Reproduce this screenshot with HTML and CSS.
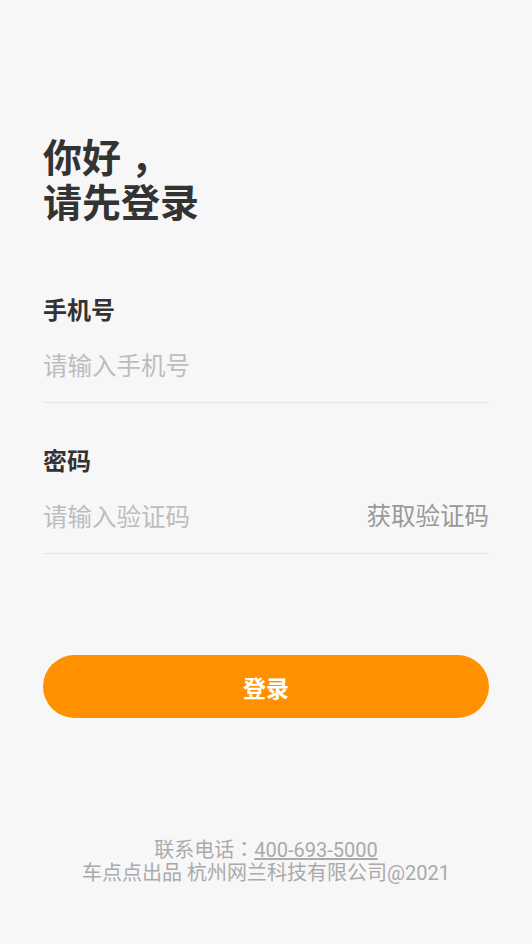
FILE: index.html
```html
<!DOCTYPE html>
<html lang="zh-CN">
<head>
    <meta charset="UTF-8">
    <meta name="viewport" content="width=device-width, initial-scale=1.0">
    <title>登录</title>
    <link rel="stylesheet" href="styles.css">
</head>
<body>

    <div class="page">
        <h1 class="title">你好 ，<br>请先登录</h1>

        <div class="field">
            <div class="field-label">手机号</div>
            <div class="field-row">
                <input class="field-input" type="tel" placeholder="请输入手机号">
            </div>
        </div>

        <div class="field field-code">
            <div class="field-label">密码</div>
            <div class="field-row">
                <input class="field-input" type="text" placeholder="请输入验证码">
                <span class="btn-code">获取验证码</span>
            </div>
        </div>

        <button class="btn-login">登录</button>

        <div class="footer">
            <div>联系电话<span class="punct" lang="zh-TW">：</span><span class="phone">400-693-5000</span></div>
            <div>车点点出品 杭州网兰科技有限公司@2021</div>
        </div>
    </div>

</body>
</html>
```

FILE: styles.css
```css
body {
    margin: 0;
    background-color: #f7f7f7;
    font-family: Roboto, "Noto Sans CJK SC", sans-serif;
}
.page {
    padding: 137px 43px 0;
}
.title {
    margin: 0;
    font-size: 39px;
    line-height: 45px;
    font-weight: bold;
    color: #333;
}
/* colon centred in its cell */
.punct {
    font-family: "Noto Sans CJK TC", sans-serif;
    line-height: 0;
}
.field {
    margin-top: 69px;
    border-bottom: 1px solid #e6e6e6;
}
.field-code {
    margin-top: 44px;
}
.field-label {
    font-size: 24px;
    line-height: 30px;
    font-weight: bold;
    color: #333;
}
.field-row {
    display: flex;
    align-items: center;
    padding: 23px 0 19px;
}
.field-input {
    flex: 1;
    min-width: 0;
    height: 34px;
    padding: 0;
    border: none;
    outline: none;
    background: transparent;
    font-family: Roboto, "Noto Sans CJK SC", sans-serif;
    font-size: 24.5px;
    color: #333;
}
.field-input::placeholder {
    color: #bdbdbd;
}
.btn-code {
    font-size: 24.5px;
    line-height: 34px;
    color: #999;
}
.btn-login {
    display: block;
    width: 100%;
    height: 63px;
    margin-top: 101px;
    border: none;
    border-radius: 32px;
    background-color: #ff9100;
    color: white;
    font-family: Roboto, "Noto Sans CJK SC", sans-serif;
    font-size: 23px;
    font-weight: bold;
}
.footer {
    margin-top: 121px;
    text-align: center;
    font-size: 20px;
    line-height: 23px;
    color: #aaa;
}
.phone {
    text-decoration: underline;
}
```
